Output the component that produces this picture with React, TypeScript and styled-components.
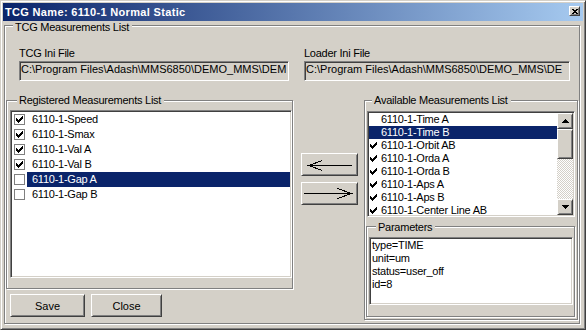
import React from "react";
import styled, { createGlobalStyle, css } from "styled-components";

const FACE = "#d4d0c8";
const SHADOW = "#808080";
const DARK = "#404040";
const SELECT = "#0a246a";

const GlobalStyle = createGlobalStyle`
  * { box-sizing: border-box; }
  html, body { margin: 0; padding: 0; background: ${FACE}; }
  body {
    font-family: "Liberation Sans", Arial, sans-serif;
    font-size: 11px;
    letter-spacing: -0.25px;
    color: #000;
  }
`;

const sunken = css`
  border: 1px solid;
  border-color: ${SHADOW} #fff #fff ${SHADOW};
  box-shadow: inset 1px 1px ${DARK}, inset -1px -1px ${FACE};
  padding: 1px;
`;

const raised = css`
  border: 1px solid;
  border-color: #fff ${DARK} ${DARK} #fff;
  box-shadow: inset 1px 1px ${FACE}, inset -1px -1px ${SHADOW};
  background: ${FACE};
`;

const Window = styled.div`
  width: 586px;
  height: 330px;
  display: flex;
  flex-direction: column;
  background: ${FACE};
  border: 1px solid;
  border-color: ${FACE} ${DARK} ${DARK} ${FACE};
  box-shadow: inset 1px 1px #fff, inset -1px -1px ${SHADOW};
  padding: 2px;
`;

const TitleBar = styled.div`
  flex: none;
  height: 18px;
  display: flex;
  justify-content: space-between;
  padding: 0 3px 0 2px;
  background: linear-gradient(90deg, #0a246a, #a6caf0);
`;

const TitleText = styled.span`
  color: #fff;
  font-weight: bold;
  letter-spacing: 0.33px;
  line-height: 18px;
  white-space: nowrap;
`;

const CloseButton = styled.div`
  ${raised};
  width: 11px;
  height: 10px;
  margin-top: 3px;
  display: flex;
  align-items: center;
  justify-content: center;
`;

const Group = styled.div`
  display: flex;
  flex-direction: column;
  border: 1px solid ${SHADOW};
  box-shadow: inset 1px 1px #fff, 1px 1px #fff;
`;

const Caption = styled.div<{ $indent: number; $lift: number }>`
  align-self: flex-start;
  margin: ${(p) => -p.$lift}px 0 0 ${(p) => p.$indent}px;
  padding: 0 3px 0 2px;
  line-height: 13px;
  background: ${FACE};
  white-space: nowrap;
`;

const MainGroup = styled(Group)`
  flex: 1;
  margin: 4px 3px 3px 1px;
`;

const FilesRow = styled.div`
  display: flex;
  gap: 15px;
  margin-top: 13px;
  padding-left: 14px;
`;

const Field = styled.div`
  display: flex;
  flex-direction: column;
`;

const FieldLabel = styled.div`
  line-height: 13px;
  margin-bottom: 1px;
`;

const TextBox = styled.div<{ $width: number }>`
  ${sunken};
  width: ${(p) => p.$width}px;
  height: 20px;
  letter-spacing: 0;
  line-height: 12px;
  white-space: nowrap;
  overflow: hidden;
`;

const MainRow = styled.div`
  display: flex;
  align-items: flex-start;
  margin-top: 19px;
  padding-left: 1px;
`;

const LeftColumn = styled.div`
  display: flex;
  flex-direction: column;
  width: 287px;
`;

const RegisteredGroup = styled(Group)`
  padding: 0 0 10px 3px;
`;

const ListBox = styled.div<{ $height: number; $gap: number }>`
  ${sunken};
  height: ${(p) => p.$height}px;
  margin-top: ${(p) => p.$gap}px;
  background: #fff;
  overflow: hidden;
`;

const CheckRow = styled.div`
  display: flex;
  align-items: center;
  height: 15px;
  padding-left: 2px;
`;

const CheckBox = styled.span`
  flex: none;
  width: 11px;
  height: 11px;
  margin-right: 2px;
  border: 1px solid ${SHADOW};
  background: #fff;
  display: flex;
  align-items: center;
  justify-content: center;
`;

const ItemLabel = styled.span<{ $selected?: boolean }>`
  flex: 1;
  height: 15px;
  line-height: 15px;
  padding-left: 5px;
  white-space: nowrap;
  background: ${(p) => (p.$selected ? SELECT : "transparent")};
  color: ${(p) => (p.$selected ? "#fff" : "#000")};
`;

const ButtonRow = styled.div`
  display: flex;
  gap: 6px;
  margin-top: 5px;
  padding-left: 4px;
`;

const PushButton = styled.button<{ $width: number }>`
  ${raised};
  width: ${(p) => p.$width}px;
  height: 23px;
  padding: 0;
  font: inherit;
  letter-spacing: 0;
  color: #000;
`;

const ArrowColumn = styled.div`
  display: flex;
  flex-direction: column;
  gap: 6px;
  margin: 53px 0 0 8px;
`;

const ArrowButton = styled.button`
  ${raised};
  width: 57px;
  height: 23px;
  padding: 0;
  display: block;

  svg {
    display: block;
  }
`;

const AvailableGroup = styled(Group)`
  width: 214px;
  margin-left: 6px;
  padding: 0 2px 2px 2px;
`;

const AvailableList = styled(ListBox)`
  display: flex;
`;

const AvailableItems = styled.div`
  flex: 1;
  overflow: hidden;
`;

const AvailableRow = styled.div<{ $selected?: boolean }>`
  display: flex;
  align-items: center;
  height: 13px;
  line-height: 13px;
  white-space: nowrap;
  background: ${(p) => (p.$selected ? SELECT : "transparent")};
  color: ${(p) => (p.$selected ? "#fff" : "#000")};
`;

const Tick = styled.span`
  flex: none;
  width: 12px;
  padding-left: 1px;
  display: flex;
`;

const ScrollBar = styled.div`
  flex: none;
  width: 16px;
  display: flex;
  flex-direction: column;
  background: repeating-conic-gradient(#fff 0 25%, ${FACE} 0 50%) 0 0 / 2px 2px;
`;

const ScrollButton = styled.div`
  ${raised};
  height: 16px;
  display: flex;
  align-items: center;
  justify-content: center;
`;

const ScrollThumb = styled.div`
  ${raised};
  height: 30px;
`;

const ScrollTrack = styled.div`
  flex: 1;
`;

const ParametersGroup = styled(Group)`
  margin: 9px 0 0 -1px;
  padding: 0 1px 11px 2px;
`;

const ParametersBox = styled.div`
  ${sunken};
  height: 68px;
  margin-top: 3px;
  background: #fff;
  line-height: 13px;
  padding-left: 2px;
`;

const CHECK_PATH =
  "M6 0h1v1h-1z M5 1h2v1h-2z M0 2h1v1h-1z M4 2h3v1h-3z M0 3h2v1h-2z M3 3h3v1h-3z M0 4h5v1h-5z M1 5h3v1h-3z M2 6h1v1h-1z";

const CheckGlyph = () => (
  <svg width="7" height="7" viewBox="0 0 7 7" shapeRendering="crispEdges">
    <path d={CHECK_PATH} fill="#000" />
  </svg>
);

const CloseGlyph = () => (
  <svg width="6" height="5" viewBox="0 0 6 5" shapeRendering="crispEdges">
    <path
      d="M0 0h2v1h-2z M4 0h2v1h-2z M1 1h4v1h-4z M2 2h2v1h-2z M1 3h4v1h-4z M0 4h2v1h-2z M4 4h2v1h-2z"
      fill="#000"
    />
  </svg>
);

const ScrollArrow = ({ down }: { down?: boolean }) => (
  <svg width="7" height="4" viewBox="0 0 7 4" shapeRendering="crispEdges">
    <path
      d={
        down
          ? "M0 0h7v1h-7z M1 1h5v1h-5z M2 2h3v1h-3z M3 3h1v1h-1z"
          : "M3 0h1v1h-1z M2 1h3v1h-3z M1 2h5v1h-5z M0 3h7v1h-7z"
      }
      fill="#000"
    />
  </svg>
);

const LeftArrow = () => (
  <svg width="55" height="21" viewBox="0 0 55 21" shapeRendering="crispEdges">
    <path d="M6 11h44v1h-44z" fill="#000" />
    <path d="M20.5 6.5 L6.5 11.5 L20.5 16.5" stroke="#000" fill="none" />
  </svg>
);

const RightArrow = () => (
  <svg width="55" height="21" viewBox="0 0 55 21" shapeRendering="crispEdges">
    <path d="M2 10h48v1h-48z" fill="#000" />
    <path d="M35.5 5.5 L49.5 10.5 L35.5 15.5" stroke="#000" fill="none" />
  </svg>
);

const registered = [
  { name: "6110-1-Speed", checked: true },
  { name: "6110-1-Smax", checked: true },
  { name: "6110-1-Val A", checked: true },
  { name: "6110-1-Val B", checked: true },
  { name: "6110-1-Gap A", checked: false, selected: true },
  { name: "6110-1-Gap B", checked: false },
];

const available = [
  { name: "6110-1-Time A", checked: false },
  { name: "6110-1-Time B", checked: false, selected: true },
  { name: "6110-1-Orbit AB", checked: true },
  { name: "6110-1-Orda A", checked: true },
  { name: "6110-1-Orda B", checked: true },
  { name: "6110-1-Aps A", checked: true },
  { name: "6110-1-Aps B", checked: true },
  { name: "6110-1-Center Line AB", checked: true },
];

const parameters = ["type=TIME", "unit=um", "status=user_off", "id=8"];

const App: React.FC = () => {
  return (
    <>
      <GlobalStyle />
      <Window>
        <TitleBar>
          <TitleText>TCG Name: 6110-1 Normal Static</TitleText>
          <CloseButton>
            <CloseGlyph />
          </CloseButton>
        </TitleBar>

        <MainGroup>
          <Caption $indent={8} $lift={5}>
            TCG Measurements List
          </Caption>

          <FilesRow>
            <Field>
              <FieldLabel>TCG Ini File</FieldLabel>
              <TextBox $width={270}>C:\Program Files\Adash\MMS6850\DEMO_MMS\DEM</TextBox>
            </Field>
            <Field>
              <FieldLabel>Loader Ini File</FieldLabel>
              <TextBox $width={266}>C:\Program Files\Adash\MMS6850\DEMO_MMS\DE</TextBox>
            </Field>
          </FilesRow>

          <MainRow>
            <LeftColumn>
              <RegisteredGroup>
                <Caption $indent={7} $lift={7}>
                  Registered Measurements List
                </Caption>
                <ListBox $height={168} $gap={3}>
                  {registered.map((m) => (
                    <CheckRow key={m.name}>
                      <CheckBox>{m.checked && <CheckGlyph />}</CheckBox>
                      <ItemLabel $selected={m.selected}>{m.name}</ItemLabel>
                    </CheckRow>
                  ))}
                </ListBox>
              </RegisteredGroup>
              <ButtonRow>
                <PushButton $width={75}>Save</PushButton>
                <PushButton $width={71}>Close</PushButton>
              </ButtonRow>
            </LeftColumn>

            <ArrowColumn>
              <ArrowButton>
                <LeftArrow />
              </ArrowButton>
              <ArrowButton>
                <RightArrow />
              </ArrowButton>
            </ArrowColumn>

            <AvailableGroup>
              <Caption $indent={5} $lift={7}>
                Available Measurements List
              </Caption>
              <AvailableList $height={106} $gap={4}>
                <AvailableItems>
                  {available.map((m) => (
                    <AvailableRow key={m.name} $selected={m.selected}>
                      <Tick>{m.checked && <CheckGlyph />}</Tick>
                      {m.name}
                    </AvailableRow>
                  ))}
                </AvailableItems>
                <ScrollBar>
                  <ScrollButton>
                    <ScrollArrow />
                  </ScrollButton>
                  <ScrollThumb />
                  <ScrollTrack />
                  <ScrollButton>
                    <ScrollArrow down />
                  </ScrollButton>
                </ScrollBar>
              </AvailableList>

              <ParametersGroup>
                <Caption $indent={7} $lift={6}>
                  Parameters
                </Caption>
                <ParametersBox>
                  {parameters.map((line) => (
                    <div key={line}>{line}</div>
                  ))}
                </ParametersBox>
              </ParametersGroup>
            </AvailableGroup>
          </MainRow>
        </MainGroup>
      </Window>
    </>
  );
};

export default App;
